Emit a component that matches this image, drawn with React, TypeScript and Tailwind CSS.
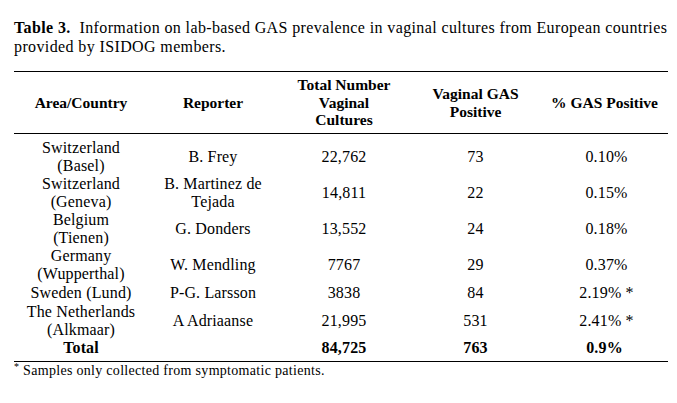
import React from 'react';

const rows = [
  { area: ['Switzerland', '(Basel)'], reporter: ['B. Frey'], total: '22,762', gas: '73', pct: '0.10%' },
  { area: ['Switzerland', '(Geneva)'], reporter: ['B. Martinez de', 'Tejada'], total: '14,811', gas: '22', pct: '0.15%' },
  { area: ['Belgium', '(Tienen)'], reporter: ['G. Donders'], total: '13,552', gas: '24', pct: '0.18%' },
  { area: ['Germany', '(Wupperthal)'], reporter: ['W. Mendling'], total: '7767', gas: '29', pct: '0.37%' },
  { area: ['Sweden (Lund)'], reporter: ['P-G. Larsson'], total: '3838', gas: '84', pct: '2.19% *' },
  { area: ['The Netherlands', '(Alkmaar)'], reporter: ['A Adriaanse'], total: '21,995', gas: '531', pct: '2.41% *' },
];

const cols = 'grid grid-cols-[134px_130px_132px_131px_127px]';

function Lines({ lines }: { lines: string[] }) {
  return (
    <>
      {lines.map((l, i) => (
        <div key={i}>{l}</div>
      ))}
    </>
  );
}

export default function App() {
  return (
    <div className="w-[677px] h-[403px] bg-white text-black px-[14px] pt-[18px] font-['Liberation_Serif',serif]">
      <p className="text-[16px] leading-[19px] tracking-[0.38px] whitespace-nowrap">
        <span className="font-bold">Table 3.</span>&nbsp;&nbsp;Information on lab-based GAS prevalence in vaginal cultures from European countries
        <br />
        provided by ISIDOG members.
      </p>

      <div className="mt-[15px] w-[654px] border-t-[1.5px] border-black">
        <div className={`${cols} h-[62px] items-center text-center font-bold text-[15.5px] leading-[17.5px] border-b border-black`}>
          <div>Area/Country</div>
          <div>Reporter</div>
          <div>
            <div>Total Number</div>
            <div>Vaginal</div>
            <div>Cultures</div>
          </div>
          <div>
            <div>Vaginal GAS</div>
            <div>Positive</div>
          </div>
          <div>% GAS Positive</div>
        </div>

        <div className="pt-[5px] pb-[4px] border-b-[1.5px] border-black text-[16px] leading-[18px] tracking-[0.15px]">
          {rows.map((r, i) => (
            <div key={i} className={`${cols} items-center text-center ${r.area.length > 1 ? 'h-[36px]' : 'h-[20px]'}`}>
              <div><Lines lines={r.area} /></div>
              <div><Lines lines={r.reporter} /></div>
              <div>{r.total}</div>
              <div>{r.gas}</div>
              <div className="pl-[4px]">{r.pct}</div>
            </div>
          ))}
          <div className={`${cols} h-[18px] items-center text-center font-bold`}>
            <div>Total</div>
            <div></div>
            <div>84,725</div>
            <div>763</div>
            <div>0.9%</div>
          </div>
        </div>
      </div>

      <p className="mt-[1px] text-[14px] leading-[16px] tracking-[0.3px]">
        <sup className="text-[10px]">*</sup> Samples only collected from symptomatic patients.
      </p>
    </div>
  );
}
